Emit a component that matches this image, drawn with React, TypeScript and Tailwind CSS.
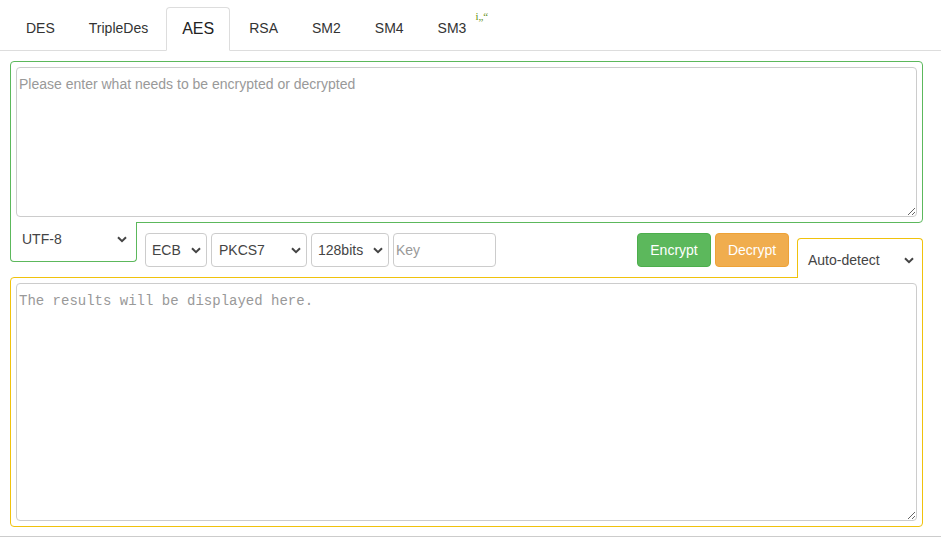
import React from "react";

const Chevron = ({ className = "" }: { className?: string }) => (
  <svg width="10" height="7" viewBox="0 0 10 7" className={className}>
    <path d="M1 1.2 L5 5.2 L9 1.2" fill="none" stroke="#444" strokeWidth="2" />
  </svg>
);

const tabs = ["DES", "TripleDes", "AES", "RSA", "SM2", "SM4", "SM3"];

export default function App() {
  return (
    <div className="w-[941px] h-[541px] overflow-hidden bg-white font-['Liberation_Sans',Arial,sans-serif] text-[14px] text-[#333]">
      <nav className="flex items-end h-[51px] border-b border-[#ddd] pl-[11px] gap-[4px]">
        {tabs.map((t) =>
          t === "AES" ? (
            <div
              key={t}
              className="h-[44px] -mb-px -ml-px flex items-center px-[15px] bg-white border border-[#ddd] border-b-white rounded-t-[4px] text-[16px] text-[#222]"
            >
              {t}
            </div>
          ) : (
            <div key={t} className="h-[43px] flex items-center px-[15px] text-[#333]">
              {t}
              {t === "SM3" && (
                <span className="self-start mt-[3px] ml-[9px] text-[11px] leading-[12px] text-[#5f8f10] font-['Liberation_Serif',serif]">
                  i„“
                </span>
              )}
            </div>
          )
        )}
      </nav>

      <div className="ml-[10px] w-[913px] mt-[10px]">
        {/* Input panel */}
        <div className="border border-[#5cb85c] rounded-[4px] rounded-bl-none p-[5px]">
          <textarea
            className="block w-full h-[150px] border border-[#ccc] rounded-[4px] px-[2px] pt-[6px] leading-[20px] text-[14px] text-[#555] placeholder:text-[#999] outline-none resize-y"
            placeholder="Please enter what needs to be encrypted or decrypted"
          />
        </div>

        {/* Controls row */}
        <div className="flex items-start h-[55px]">
          <div className="relative z-10 -mt-px w-[127px] h-[40px] bg-white border-x border-b border-[#5cb85c] rounded-b-[4px]">
            <div className="h-[34px] flex items-center justify-between pl-[11px] pr-[9px] text-[#444]">
              <span>UTF-8</span>
              <Chevron />
            </div>
          </div>

          <div className="flex gap-[4px] mt-[10px] ml-[8px]">
            <div className="w-[62px] h-[34px] border border-[#ccc] rounded-[4px] flex items-center justify-between pl-[6px] pr-[5px] text-[#444]">
              <span>ECB</span>
              <Chevron />
            </div>
            <div className="w-[96px] h-[34px] border border-[#ccc] rounded-[4px] flex items-center justify-between pl-[7px] pr-[5px] text-[#444]">
              <span>PKCS7</span>
              <Chevron />
            </div>
            <div className="w-[78px] h-[34px] border border-[#ccc] rounded-[4px] flex items-center justify-between pl-[6px] pr-[5px] text-[#444]">
              <span>128bits</span>
              <Chevron />
            </div>
            <input
              className="w-[103px] h-[34px] border border-[#ccc] rounded-[4px] pl-[2px] text-[14px] text-[#555] placeholder:text-[#999] outline-none"
              placeholder="Key"
            />
          </div>

          <div className="ml-auto flex gap-[4px] mt-[10px]">
            <button className="w-[74px] h-[34px] rounded-[4px] bg-[#5cb85c] border border-[#4cae4c] text-white text-[14px]">
              Encrypt
            </button>
            <button className="w-[74px] h-[34px] rounded-[4px] bg-[#f0ad4e] border border-[#eea236] text-white text-[14px]">
              Decrypt
            </button>
          </div>

          <div className="relative z-10 ml-[8px] mt-[15px] w-[126px] h-[40px] bg-white border-x border-t border-[#f0c20c] rounded-t-[4px]">
            <div className="h-[38px] flex items-center justify-between pl-[10px] pr-[8px] pt-[5px] text-[#444]">
              <span>Auto-detect</span>
              <Chevron />
            </div>
          </div>
        </div>

        {/* Output panel */}
        <div className="-mt-px border border-[#f0c20c] rounded-[4px] rounded-tr-none p-[5px]">
          <textarea
            className="block w-full h-[238px] border border-[#ccc] rounded-[4px] px-[2px] pt-[7px] leading-[20px] text-[14px] font-['Liberation_Mono','Courier_New',monospace] text-[#555] placeholder:text-[#999] outline-none resize-y"
            placeholder="The results will be displayed here."
          />
        </div>
      </div>

      <div className="mt-[9px] h-px bg-[#ccc]" />
    </div>
  );
}
